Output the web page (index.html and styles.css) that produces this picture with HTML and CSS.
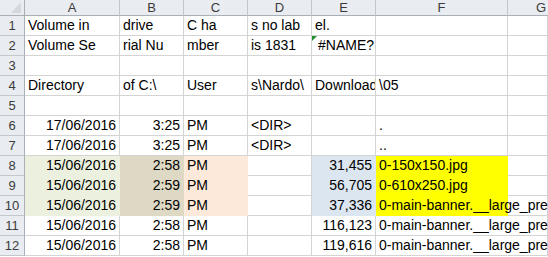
FILE: index.html
```html
<!DOCTYPE html>
<html lang="en">
<head>
  <meta charset="UTF-8">
  <title>dir listing</title>
  <link rel="stylesheet" href="styles.css">
</head>
<body>

<table class="sheet">
  <colgroup>
    <col class="w-head">
    <col class="w-a">
    <col class="w-n">
    <col class="w-n">
    <col class="w-n">
    <col class="w-n">
    <col class="w-f">
    <col class="w-g">
  </colgroup>
  <tr class="cols">
    <th class="corner"><span class="tri"></span></th>
    <th>A</th><th>B</th><th>C</th><th>D</th><th>E</th><th>F</th><th class="g">G</th>
  </tr>
  <tr>
    <th class="num">1</th>
    <td>Volume in</td><td>drive</td><td>C ha</td><td>s no lab</td><td>el.</td><td></td><td></td>
  </tr>
  <tr>
    <th class="num">2</th>
    <td>Volume Se</td><td>rial Nu</td><td>mber</td><td>is 1831</td><td class="c err">#NAME?</td><td></td><td></td>
  </tr>
  <tr>
    <th class="num">3</th>
    <td></td><td></td><td></td><td></td><td></td><td></td><td></td>
  </tr>
  <tr>
    <th class="num">4</th>
    <td>Directory</td><td>of C:\</td><td>User</td><td>s\Nardo\</td><td>Download</td><td>\05</td><td></td>
  </tr>
  <tr>
    <th class="num">5</th>
    <td></td><td></td><td></td><td></td><td></td><td></td><td></td>
  </tr>
  <tr>
    <th class="num">6</th>
    <td class="r">17/06/2016</td><td class="r">3:25</td><td>PM</td><td>&lt;DIR&gt;</td><td></td><td>.</td><td></td>
  </tr>
  <tr>
    <th class="num">7</th>
    <td class="r">17/06/2016</td><td class="r">3:25</td><td>PM</td><td>&lt;DIR&gt;</td><td></td><td>..</td><td></td>
  </tr>
  <tr>
    <th class="num">8</th>
    <td class="r fill-a">15/06/2016</td><td class="r fill-b">2:58</td><td class="fill-c">PM</td><td></td><td class="r fill-e">31,455</td><td class="fill-f">0-150x150.jpg</td><td></td>
  </tr>
  <tr>
    <th class="num">9</th>
    <td class="r fill-a">15/06/2016</td><td class="r fill-b">2:59</td><td class="fill-c">PM</td><td></td><td class="r fill-e">56,705</td><td class="fill-f">0-610x250.jpg</td><td></td>
  </tr>
  <tr>
    <th class="num">10</th>
    <td class="r fill-a">15/06/2016</td><td class="r fill-b">2:59</td><td class="fill-c">PM</td><td></td><td class="r fill-e">37,336</td><td class="fill-f spill">0-main-banner.__large_pre</td><td></td>
  </tr>
  <tr>
    <th class="num">11</th>
    <td class="r">15/06/2016</td><td class="r">2:58</td><td>PM</td><td></td><td class="r">116,123</td><td class="spill">0-main-banner.__large_pre</td><td></td>
  </tr>
  <tr>
    <th class="num">12</th>
    <td class="r">15/06/2016</td><td class="r">2:58</td><td>PM</td><td></td><td class="r">119,616</td><td class="spill">0-main-banner.__large_pre</td><td></td>
  </tr>
</table>

</body>
</html>
```

FILE: styles.css
```css
body {
  margin: 0;
  height: 257px;
  background: white;
  overflow: hidden;
  font-family: "Liberation Sans", Arial, sans-serif;
}
.sheet {
  border-collapse: separate;
  border-spacing: 0;
  table-layout: fixed;
  width: 548px;
  font-size: 14px;
  color: #000;
}
.w-head { width: 25px; }
.w-a { width: 95px; }
.w-n { width: 64px; }
.w-f { width: 132px; }
.w-g { width: 40px; }

th, td {
  padding: 0 3px;
  height: 19px;
  line-height: 19px;
  white-space: nowrap;
  overflow: hidden;
  border-right: 1px solid #d4d4d4;
  border-bottom: 1px solid #d4d4d4;
  text-align: left;
  vertical-align: bottom;
}

/* header strip and row numbers */
.cols th {
  height: 15px;
  line-height: 15px;
  font-weight: normal;
  font-size: 13px;
  color: #3b3b3b;
  text-align: center;
  background: #e9ecf0;
  border-right-color: #c3c7cc;
  border-bottom-color: #a9afb7;
}
/* G is only partly in view, its letter sits left of centre */
.cols th.g {
  text-align: left;
  padding-left: 28px;
  border-right: none;
}
th.num {
  padding: 0;
  font-weight: normal;
  font-size: 13px;
  color: #3b3b3b;
  text-align: center;
  background: #e9ecf0;
  border-right-color: #a9afb7;
  border-bottom-color: #c3c7cc;
}
.cols th.corner {
  position: relative;
  padding: 0;
  border-right-color: #a9afb7;
}
.tri {
  position: absolute;
  right: 3px;
  bottom: 2px;
  width: 0;
  height: 0;
  border-left: 10px solid transparent;
  border-bottom: 11px solid #d5d9de;
}

.r { text-align: right; }
.c { text-align: center; }

/* green error marker */
.err { position: relative; padding-left: 6px; }
.err::before {
  content: "";
  position: absolute;
  left: 0;
  top: 0;
  border-top: 5px solid #1f8f2f;
  border-right: 5px solid transparent;
}

/* cell fills cover the gridlines */
.fill-a { background: #ebf1de; border-color: #ebf1de; }
.fill-b { background: #ddd9c4; border-color: #ddd9c4; }
.fill-c { background: #fde9d9; border-color: #fde9d9; }
.fill-e { background: #dce6f1; border-color: #dce6f1; }
.fill-f { background: #ffff00; border-color: #ffff00; }

/* long file names run on into column G */
td.spill {
  overflow: visible;
  border-right-color: transparent;
}
td.fill-f.spill { border-right-color: #ffff00; }
```
